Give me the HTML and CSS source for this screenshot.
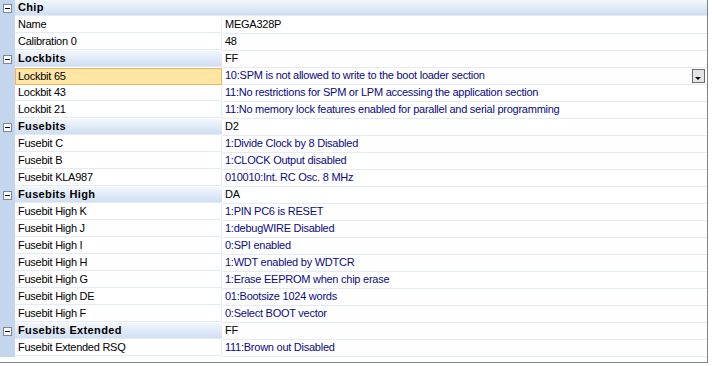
FILE: index.html
```html
<!DOCTYPE html>
<html>
<head>
    <meta charset="UTF-8">
    <title>Chip properties</title>
    <link rel="stylesheet" href="styles.css">
</head>
<body>
    <div class="grid">
        <div class="row cat">
            <div class="gutter"><span class="exp"></span></div>
            <div class="name wide">Chip</div>
        </div>
        <div class="row">
            <div class="gutter"></div>
            <div class="name">Name</div>
            <div class="value plain">MEGA328P</div>
        </div>
        <div class="row">
            <div class="gutter"></div>
            <div class="name">Calibration 0</div>
            <div class="value plain">48</div>
        </div>
        <div class="row cat">
            <div class="gutter"><span class="exp"></span></div>
            <div class="name">Lockbits</div>
            <div class="value plain">FF</div>
        </div>
        <div class="row">
            <div class="gutter"></div>
            <div class="name selected">Lockbit 65</div>
            <div class="value">10:SPM is not allowed to write to the boot loader section<span class="drop"></span></div>
        </div>
        <div class="row">
            <div class="gutter"></div>
            <div class="name">Lockbit 43</div>
            <div class="value">11:No restrictions for SPM or LPM accessing the application section</div>
        </div>
        <div class="row">
            <div class="gutter"></div>
            <div class="name">Lockbit 21</div>
            <div class="value">11:No memory lock features enabled for parallel and serial programming</div>
        </div>
        <div class="row cat">
            <div class="gutter"><span class="exp"></span></div>
            <div class="name">Fusebits</div>
            <div class="value plain">D2</div>
        </div>
        <div class="row">
            <div class="gutter"></div>
            <div class="name">Fusebit C</div>
            <div class="value">1:Divide Clock by 8 Disabled</div>
        </div>
        <div class="row">
            <div class="gutter"></div>
            <div class="name">Fusebit B</div>
            <div class="value">1:CLOCK Output disabled</div>
        </div>
        <div class="row">
            <div class="gutter"></div>
            <div class="name">Fusebit KLA987</div>
            <div class="value">010010:Int. RC Osc. 8 MHz</div>
        </div>
        <div class="row cat">
            <div class="gutter"><span class="exp"></span></div>
            <div class="name">Fusebits High</div>
            <div class="value plain">DA</div>
        </div>
        <div class="row">
            <div class="gutter"></div>
            <div class="name">Fusebit High K</div>
            <div class="value">1:PIN PC6 is RESET</div>
        </div>
        <div class="row">
            <div class="gutter"></div>
            <div class="name">Fusebit High J</div>
            <div class="value">1:debugWIRE Disabled</div>
        </div>
        <div class="row">
            <div class="gutter"></div>
            <div class="name">Fusebit High I</div>
            <div class="value">0:SPI enabled</div>
        </div>
        <div class="row">
            <div class="gutter"></div>
            <div class="name">Fusebit High H</div>
            <div class="value">1:WDT enabled by WDTCR</div>
        </div>
        <div class="row">
            <div class="gutter"></div>
            <div class="name">Fusebit High G</div>
            <div class="value">1:Erase EEPROM when chip erase</div>
        </div>
        <div class="row">
            <div class="gutter"></div>
            <div class="name">Fusebit High DE</div>
            <div class="value">01:Bootsize 1024 words</div>
        </div>
        <div class="row">
            <div class="gutter"></div>
            <div class="name">Fusebit High F</div>
            <div class="value">0:Select BOOT vector</div>
        </div>
        <div class="row cat">
            <div class="gutter"><span class="exp"></span></div>
            <div class="name">Fusebits Extended</div>
            <div class="value plain">FF</div>
        </div>
        <div class="row">
            <div class="gutter"></div>
            <div class="name">Fusebit Extended RSQ</div>
            <div class="value">111:Brown out Disabled</div>
        </div>
    </div>
</body>
</html>
```

FILE: styles.css
```css
body {
    margin: 0;
    background: #fff;
    font-family: Tahoma, "Liberation Sans", sans-serif;
    font-size: 11px;
    letter-spacing: -0.25px;
}
.grid {
    width: 707px;
    height: 362px;
    border-right: 1px solid #7f8389;
    border-bottom: 1px solid #7f8389;
}
.row {
    display: flex;
    height: 17px;
}
.gutter {
    width: 15px;
    flex: none;
    background: #c4d6ee;
    display: flex;
    align-items: center;
    justify-content: center;
}
.name, .value {
    height: 16px;
    line-height: 15px;
    border-bottom: 1px solid #e3ebf7;
    white-space: nowrap;
    overflow: hidden;
}
.name {
    width: 207px;
    flex: none;
    box-sizing: border-box;
    padding-left: 3px;
    border-right: 1px solid #e3ebf7;
    color: #000;
}
.value {
    flex: 1;
    padding-left: 3px;
    color: #0a0a84;
    display: flex;
    justify-content: space-between;
}
.value.plain {
    color: #000;
}
.cat .name {
    font-weight: bold;
    letter-spacing: 0.35px;
    background: linear-gradient(#f3f7fc, #cfdef2);
    border-right: none;
}
.cat .name.wide {
    flex: 1;
}
.exp {
    width: 7px;
    height: 7px;
    border: 1px solid #7b8896;
    background: #fff;
    position: relative;
}
.exp::after {
    content: "";
    position: absolute;
    left: 1px;
    right: 1px;
    top: 3px;
    height: 1px;
    background: #000;
}
.name.selected {
    background: #ffe6a4;
    border: 1px solid #f2b35c;
    padding-left: 2px;
    line-height: 14px;
    height: 17px;
}
.drop {
    width: 11px;
    height: 12px;
    margin: 1px 2px 0 0;
    border: 1px solid #6b6b6b;
    background: #e4e4e4;
    position: relative;
}
.drop::after {
    content: "";
    position: absolute;
    left: 2px;
    bottom: 2px;
    border-left: 3px solid transparent;
    border-right: 3px solid transparent;
    border-top: 3px solid #000;
}
```
